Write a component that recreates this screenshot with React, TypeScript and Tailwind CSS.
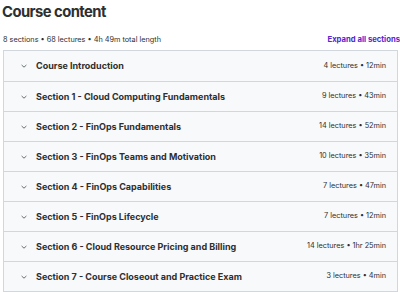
import React from 'react';

const sections = [
  { title: 'Course Introduction', meta: '4 lectures • 12min' },
  { title: 'Section 1 - Cloud Computing Fundamentals', meta: '9 lectures • 43min' },
  { title: 'Section 2 - FinOps Fundamentals', meta: '14 lectures • 52min' },
  { title: 'Section 3 - FinOps Teams and Motivation', meta: '10 lectures • 35min' },
  { title: 'Section 4 - FinOps Capabilities', meta: '7 lectures • 47min' },
  { title: 'Section 5 - FinOps Lifecycle', meta: '7 lectures • 12min' },
  { title: 'Section 6 - Cloud Resource Pricing and Billing', meta: '14 lectures • 1hr 25min' },
  { title: 'Section 7 - Course Closeout and Practice Exam', meta: '3 lectures • 4min' },
];

const Chevron = () => (
  <svg width="8" height="8" viewBox="0 0 8 8" className="shrink-0">
    <path d="M1.6 3 L4 5.2 L6.4 3" fill="none" stroke="#6a6f73" strokeWidth="1" />
  </svg>
);

export default function App() {
  return (
    <div className="w-[400px] h-[292px] overflow-hidden bg-white text-[#2d2f31]" style={{ fontFamily: 'Inter, sans-serif' }}>
      <h2 className="pl-[2px] pt-[2px] text-[14.8px] leading-[20px] font-bold tracking-[-0.55px]">Course content</h2>
      <div className="flex items-center justify-between pl-[3px] mt-[8px] h-[20px]">
        <span className="text-[7.3px] text-[#2d2f31]">8 sections • 68 lectures • 4h 49m total length</span>
        <span className="text-[7.7px] font-bold text-[#5624d0] whitespace-nowrap">Expand all sections</span>
      </div>
      <div className="ml-[3px] w-[395px] border border-[#d1d7dc] bg-[#f7f9fa]">
        {sections.map((s, i) => (
          <div
            key={i}
            className={`flex items-center h-[30px] pl-[16px] pr-[11px] ${i > 0 ? 'border-t border-[#d1d7dc]' : ''}`}
          >
            <Chevron />
            <span className="ml-[8px] text-[9px] font-bold text-[#2d2f31] flex-1">{s.title}</span>
            <span className="text-[7.3px] text-[#2d2f31]">{s.meta}</span>
          </div>
        ))}
      </div>
    </div>
  );
}
